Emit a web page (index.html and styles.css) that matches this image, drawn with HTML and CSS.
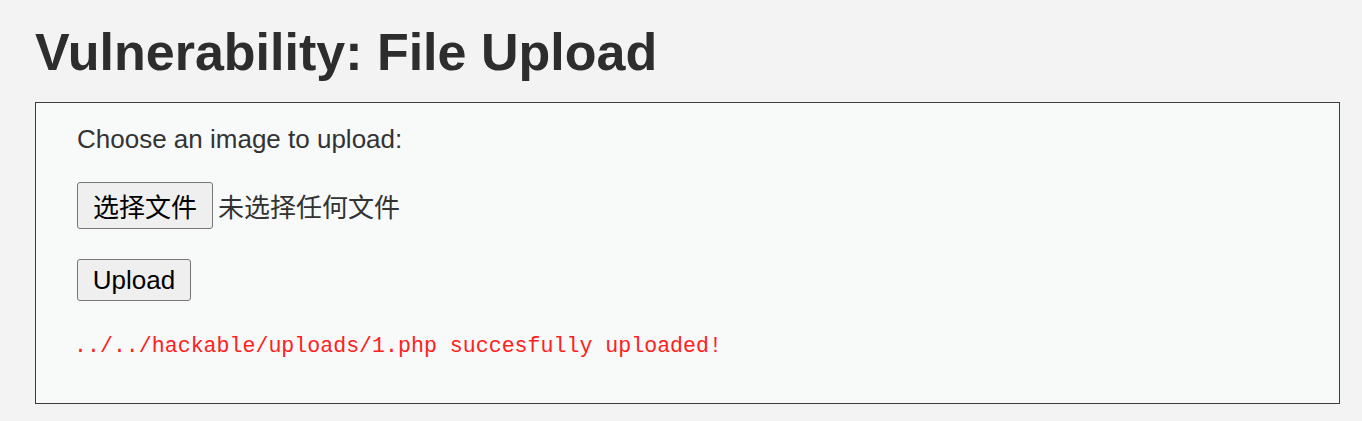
FILE: index.html
```html
<!DOCTYPE html>
<html lang="zh-CN">
<head>
<meta charset="utf-8">
<title>Vulnerability: File Upload</title>
<link rel="stylesheet" href="styles.css">
</head>
<body>
<div class="page">
  <h1 class="title">Vulnerability: File Upload</h1>
  <div class="vulnerable-box">
    <form class="upload-form">
      <p class="prompt">Choose an image to upload:</p>
      <div class="file-row">
        <button type="button" class="btn btn-file">选择文件</button>
        <span class="file-status">未选择任何文件</span>
      </div>
      <div class="submit-row">
        <button type="button" class="btn btn-upload">Upload</button>
      </div>
    </form>
    <pre class="result">../../hackable/uploads/1.php succesfully uploaded!</pre>
  </div>
</div>
</body>
</html>
```

FILE: styles.css
```css
html, body {
  margin: 0;
  padding: 0;
  background: #f3f3f3;
}

.page {
  padding: 22px 22px 0 35px;
  font-family: "Liberation Sans", Arial, sans-serif;
  color: #333;
}

.title {
  margin: 0 0 20px 0;
  font-size: 52px;
  line-height: 60px;
  font-weight: bold;
  color: #2d2d2d;
}

.vulnerable-box {
  border: 1px solid #3c3c3c;
  background: #f8f9f9;
  padding: 21px 20px 44px 41px;
}

.upload-form {
  display: flex;
  flex-direction: column;
  align-items: flex-start;
}

.prompt {
  margin: 0;
  font-size: 26px;
  line-height: 30px;
  color: #333;
}

.file-row {
  margin-top: 28px;
  display: flex;
  align-items: center;
  gap: 5px;
}

.btn {
  box-sizing: border-box;
  margin: 0;
  background: #efefef;
  border: 1px solid #767676;
  border-radius: 3px;
  color: #000;
  padding: 0 14px;
  cursor: default;
}

.btn-file {
  height: 47px;
  width: 136px;
  font-family: "Noto Sans CJK SC", "Liberation Sans", sans-serif;
  font-size: 26px;
  line-height: 1;
}

.file-status {
  font-family: "Noto Sans CJK SC", "Liberation Sans", sans-serif;
  font-size: 26px;
  line-height: 30px;
  color: #333;
}

.submit-row {
  margin-top: 30px;
}

.btn-upload {
  height: 42px;
  width: 114px;
  font-family: "Liberation Sans", Arial, sans-serif;
  font-size: 26px;
  line-height: 1;
}

.result {
  margin: 32px 0 0 -3px;
  font-family: "Liberation Mono", "Courier New", monospace;
  font-size: 21.6px;
  line-height: 26px;
  color: #ff2020;
}
```
